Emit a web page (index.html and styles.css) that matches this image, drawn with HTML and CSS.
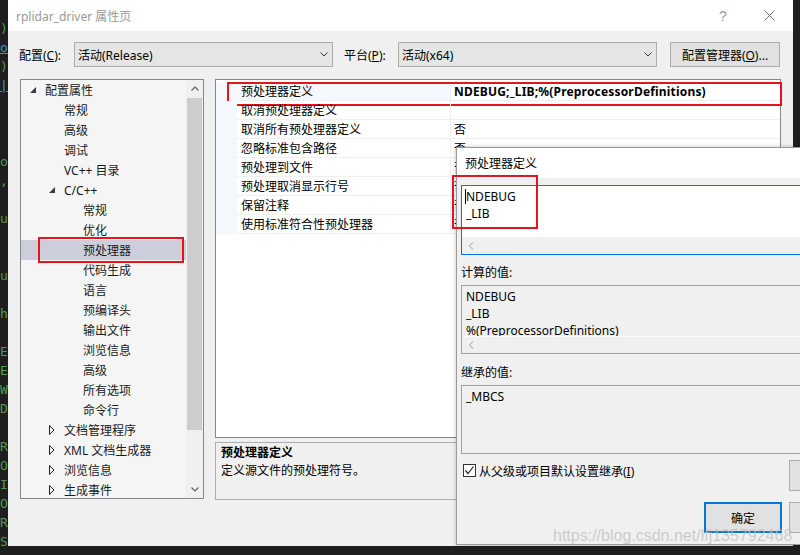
FILE: index.html
```html
<!DOCTYPE html>
<html lang="zh-CN">
<head>
<meta charset="utf-8">
<title>rplidar_driver 属性页</title>
<link rel="stylesheet" href="styles.css">
</head>
<body>
<div class="desktop">
  <pre class="code-strip"><span class="c">)</span>
<span class="lnk">o</span>
<span class="c">)</span>
<span class="lnk">|</span>



<span class="c">o</span>
<span class="c">,</span>

<span class="c">u</span>


<span class="c">u</span>

<span class="c">h</span>

<span class="c">E</span>
<span class="c">E</span>
<span class="c">W</span>
<span class="c">D</span>

<span class="c">R</span>
<span class="c">O</span>
<span class="c">I</span>
<span class="c">O</span>
<span class="c">R</span>
<span class="c">S</span></pre>

  <div class="window">
    <div class="titlebar">
      <span class="title">rplidar_driver 属性页</span>
      <span class="cap-btn help">?</span>
      <span class="cap-btn close"><svg width="11" height="11" viewBox="0 0 11 11"><path d="M0.5 0.5 L10.5 10.5 M10.5 0.5 L0.5 10.5" stroke="#6f6f6f" stroke-width="1" fill="none"/></svg></span>
    </div>

    <div class="config-row">
      <span class="lbl lbl-config">配置(<u>C</u>):</span>
      <div class="combo"><span>活动(Release)</span><svg class="chev" width="8" height="5" viewBox="0 0 8 5"><polyline points="0.5,0.5 4,4 7.5,0.5" fill="none" stroke="#333" stroke-width="1"/></svg></div>
      <span class="lbl lbl-platform">平台(<u>P</u>):</span>
      <div class="combo"><span>活动(x64)</span><svg class="chev" width="8" height="5" viewBox="0 0 8 5"><polyline points="0.5,0.5 4,4 7.5,0.5" fill="none" stroke="#333" stroke-width="1"/></svg></div>
      <button class="btn btn-mgr">配置管理器(<u>O</u>)...</button>
    </div>

    <div class="main">
      <div class="tree">
        <ul class="tree-list">
          <li class="ti l1"><span class="tw"><svg width="6" height="6" viewBox="0 0 6 6"><polygon points="6,0 6,6 0,6" fill="#3c3c3c"/></svg></span>配置属性</li>
          <li class="ti l2"><span class="tw"></span>常规</li>
          <li class="ti l2"><span class="tw"></span>高级</li>
          <li class="ti l2"><span class="tw"></span>调试</li>
          <li class="ti l2"><span class="tw"></span>VC++ 目录</li>
          <li class="ti l2"><span class="tw"><svg width="6" height="6" viewBox="0 0 6 6"><polygon points="6,0 6,6 0,6" fill="#3c3c3c"/></svg></span>C/C++</li>
          <li class="ti l3"><span class="tw"></span>常规</li>
          <li class="ti l3"><span class="tw"></span>优化</li>
          <li class="ti l3 sel"><span class="tw"></span>预处理器</li>
          <li class="ti l3"><span class="tw"></span>代码生成</li>
          <li class="ti l3"><span class="tw"></span>语言</li>
          <li class="ti l3"><span class="tw"></span>预编译头</li>
          <li class="ti l3"><span class="tw"></span>输出文件</li>
          <li class="ti l3"><span class="tw"></span>浏览信息</li>
          <li class="ti l3"><span class="tw"></span>高级</li>
          <li class="ti l3"><span class="tw"></span>所有选项</li>
          <li class="ti l3"><span class="tw"></span>命令行</li>
          <li class="ti l2"><span class="tw"><svg width="6" height="10" viewBox="0 0 6 10"><polygon points="0.5,0.5 5,5 0.5,9.5" fill="none" stroke="#1e1e1e" stroke-width="1"/></svg></span>文档管理程序</li>
          <li class="ti l2"><span class="tw"><svg width="6" height="10" viewBox="0 0 6 10"><polygon points="0.5,0.5 5,5 0.5,9.5" fill="none" stroke="#1e1e1e" stroke-width="1"/></svg></span>XML 文档生成器</li>
          <li class="ti l2"><span class="tw"><svg width="6" height="10" viewBox="0 0 6 10"><polygon points="0.5,0.5 5,5 0.5,9.5" fill="none" stroke="#1e1e1e" stroke-width="1"/></svg></span>浏览信息</li>
          <li class="ti l2"><span class="tw"><svg width="6" height="10" viewBox="0 0 6 10"><polygon points="0.5,0.5 5,5 0.5,9.5" fill="none" stroke="#1e1e1e" stroke-width="1"/></svg></span>生成事件</li>
        </ul>
        <div class="vscroll">
          <span class="sb-btn"><svg width="8" height="5" viewBox="0 0 8 5"><polyline points="0.5,4.5 4,1 7.5,4.5" fill="none" stroke="#606060" stroke-width="1.2"/></svg></span>
          <span class="thumb"></span>
          <span class="track"></span>
          <span class="sb-btn"><svg width="8" height="5" viewBox="0 0 8 5"><polyline points="0.5,0.5 4,4 7.5,0.5" fill="none" stroke="#606060" stroke-width="1.2"/></svg></span>
        </div>
      </div>

      <div class="right">
        <div class="pgrid">
          <div class="prow hl"><span class="pstripe"></span><span class="pname">预处理器定义</span><span class="pval bold">NDEBUG;_LIB;%(PreprocessorDefinitions)</span></div>
          <div class="prow"><span class="pstripe"></span><span class="pname">取消预处理器定义</span><span class="pval"></span></div>
          <div class="prow"><span class="pstripe"></span><span class="pname">取消所有预处理器定义</span><span class="pval">否</span></div>
          <div class="prow"><span class="pstripe"></span><span class="pname">忽略标准包含路径</span><span class="pval">否</span></div>
          <div class="prow"><span class="pstripe"></span><span class="pname">预处理到文件</span><span class="pval">否</span></div>
          <div class="prow"><span class="pstripe"></span><span class="pname">预处理取消显示行号</span><span class="pval">否</span></div>
          <div class="prow"><span class="pstripe"></span><span class="pname">保留注释</span><span class="pval">否</span></div>
          <div class="prow"><span class="pstripe"></span><span class="pname">使用标准符合性预处理器</span><span class="pval">否</span></div>
        </div>
        <div class="desc">
          <div class="desc-title">预处理器定义</div>
          <div>定义源文件的预处理符号。</div>
        </div>
      </div>
    </div>

    <div class="dialog">
      <div class="dlg-title">预处理器定义</div>
      <div class="dlg-body">
        <div class="editbox">
          <div class="eb-text"><span class="caret"></span>NDEBUG<br>_LIB</div>
          <div class="hscroll"><svg width="6" height="8" viewBox="0 0 6 8"><polyline points="5,0.5 1.5,4 5,7.5" fill="none" stroke="#c2c2c2" stroke-width="1.4"/></svg></div>
        </div>
        <div class="annot"></div>
        <div class="field-label">计算的值:</div>
        <div class="readbox">
          <div class="eb-text">NDEBUG<br>_LIB<br>%(PreprocessorDefinitions)</div>
          <div class="hscroll ro"><svg width="6" height="8" viewBox="0 0 6 8"><polyline points="5,0.5 1.5,4 5,7.5" fill="none" stroke="#c2c2c2" stroke-width="1.4"/></svg></div>
        </div>
        <div class="field-label second">继承的值:</div>
        <div class="readbox">
          <div class="eb-text">_MBCS</div>
        </div>
        <div class="check-row">
          <div class="check-cell">
            <span class="checkbox"><svg width="11" height="11" viewBox="0 0 11 11"><polyline points="1.5,5.5 4,8.5 9.5,1.5" fill="none" stroke="#222" stroke-width="1.2"/></svg></span>
            <span>从父级或项目默认设置继承(<u>I</u>)</span>
          </div>
          <button class="btn btn-side" aria-label="宏"></button>
        </div>
        <div class="btn-row">
          <button class="btn btn-ok">确定</button>
          <button class="btn btn-side" aria-label="取消"></button>
        </div>
      </div>
    </div>
  </div>

  <div class="watermark">https://blog.csdn.net/lfj135792468</div>
</div>
</body>
</html>
```

FILE: styles.css
```css
html, body {
  margin: 0;
  padding: 0;
  overflow: hidden;
}

body {
  width: 800px;
  height: 555px;
  background: #1e1e1e;
  font-family: "Noto Sans", "Noto Sans CJK SC", sans-serif;
  font-size: 12px;
  color: #000;
}

.desktop {
  position: relative;
  width: 800px;
  height: 555px;
  overflow: hidden;
  display: grid;
  grid-template-columns: 8px 785px 7px;
  grid-template-rows: 546px 9px;
}

.code-strip {
  grid-column: 1;
  grid-row: 1 / 3;
  margin: 0;
  padding-top: 19px;
  overflow: hidden;
  font-family: "DejaVu Sans Mono", "Liberation Mono", monospace;
  font-size: 13px;
  line-height: 19px;
  color: #4e9a4e;
}

.code-strip .lnk {
  color: #3b8eea;
  text-decoration: underline;
}

.window {
  grid-column: 2;
  grid-row: 1;
  position: relative;
  background: #f0f0f0;
  display: flex;
  flex-direction: column;
}

/* title bar */
.titlebar {
  height: 31px;
  background: #fff;
  display: flex;
  align-items: center;
  padding-left: 8px;
  padding-right: 1px;
}

.title {
  flex: 1;
  color: #9a9a9a;
}

.cap-btn {
  width: 46px;
  height: 31px;
  display: flex;
  align-items: center;
  justify-content: center;
  color: #9a9a9a;
}

.help {
  font-size: 14px;
  font-family: "Liberation Sans", sans-serif;
}

/* config row */
.config-row {
  display: flex;
  align-items: center;
  height: 25px;
  margin-top: 11px;
  padding-left: 11px;
}

.lbl-config {
  width: 55px;
}

.lbl-platform {
  width: 54px;
  margin-left: 11px;
}

.combo {
  width: 259px;
  height: 25px;
  box-sizing: border-box;
  border: 1px solid #adadad;
  background: #e5e5e5;
  display: flex;
  align-items: center;
  justify-content: space-between;
  padding: 0 4px 0 3px;
}

.btn {
  font: inherit;
  color: #000;
  padding: 0;
  margin: 0;
  box-sizing: border-box;
  border: 1px solid #adadad;
  background: #e1e1e1;
}

.btn-mgr {
  margin-left: 13px;
  width: 110px;
  height: 25px;
}

/* main area */
.main {
  display: flex;
  gap: 11px;
  margin-top: 12px;
  padding-left: 12px;
}

.tree {
  width: 184px;
  height: 420px;
  box-sizing: border-box;
  border: 1px solid #828790;
  background: #f5f5f5;
  display: flex;
}

.tree-list {
  list-style: none;
  margin: 0;
  padding: 0;
  flex: 1;
  overflow: hidden;
}

.ti {
  position: relative;
  height: 20px;
  display: flex;
  align-items: center;
  white-space: nowrap;
  color: #1a1a1a;
}

.tw {
  width: 15px;
  flex: none;
  display: flex;
  align-items: center;
}

.l1 { padding-left: 9px; }
.l2 { padding-left: 28px; }
.l3 { padding-left: 47px; }

.sel {
  background: #cccedb;
}

.sel::after {
  content: "";
  position: absolute;
  left: 17px;
  top: -3px;
  width: 146px;
  height: 26px;
  box-sizing: border-box;
  border: 2px solid #e5141e;
}

.vscroll {
  width: 17px;
  flex: none;
  background: #f0f0f0;
  display: flex;
  flex-direction: column;
  align-items: center;
}

.sb-btn {
  height: 17px;
  width: 17px;
  display: flex;
  align-items: center;
  justify-content: center;
}

.thumb {
  width: 15px;
  height: 332px;
  margin-top: 1px;
  background: #cdcdcd;
}

.track {
  flex: 1;
}

.right {
  width: 566px;
  display: flex;
  flex-direction: column;
  gap: 4px;
}

.pgrid {
  height: 359px;
  box-sizing: border-box;
  border: 1px solid #828790;
  background: #fff;
  padding-top: 2px;
}

.prow {
  position: relative;
  display: flex;
  height: 19px;
}

.pstripe {
  width: 21px;
  flex: none;
  background: #f4f7fb;
}

.pname {
  width: 214px;
  flex: none;
  box-sizing: border-box;
  padding: 2px 0 0 4px;
  border-bottom: 1px solid #efefef;
  border-right: 1px solid #efefef;
  line-height: 16px;
  white-space: nowrap;
}

.pval {
  flex: 1;
  box-sizing: border-box;
  padding: 2px 0 0 3px;
  border-bottom: 1px solid #efefef;
  line-height: 16px;
  white-space: nowrap;
}

.hl .pname {
  background: #f4f7fb;
}

.bold {
  font-weight: 700;
  letter-spacing: 0.18px;
}

.hl::after {
  content: "";
  position: absolute;
  left: 11px;
  top: 0;
  width: 555px;
  height: 24px;
  box-sizing: border-box;
  border: 2px solid #e5141e;
}

.desc {
  height: 58px;
  box-sizing: border-box;
  border: 1px solid #adadad;
  padding: 1px 0 0 5px;
  line-height: 18px;
}

.desc-title {
  font-weight: 700;
}

/* dialog */
.dialog {
  position: absolute;
  left: 448px;
  top: 147px;
  width: 440px;
  height: 398px;
  box-sizing: border-box;
  border: 1px solid #9a9a9a;
  background: #f0f0f0;
  box-shadow: 0 0 4px rgba(0, 0, 0, 0.25);
}

.dlg-title {
  height: 30px;
  background: #fff;
  display: flex;
  align-items: center;
  padding-left: 8px;
}

.dlg-body {
  position: relative;
  padding: 7px 0 0 4px;
}

.editbox {
  width: 400px;
  height: 70px;
  box-sizing: border-box;
  border: 1px solid #0078d7;
  background: #fff;
  display: flex;
  flex-direction: column;
}

.eb-text {
  flex: 1;
  min-height: 0;
  overflow: hidden;
  padding: 2px 0 0 4px;
  line-height: 17px;
}

.caret {
  display: inline-block;
  width: 1px;
  height: 15px;
  margin-left: -1px;
  background: #000;
  vertical-align: -3px;
}

.hscroll {
  height: 17px;
  flex: none;
  background: #f0f0f0;
  display: flex;
  align-items: center;
  padding-left: 6px;
}

.hscroll.ro {
  border-top: 1px solid #fbfbfb;
  height: 16px;
}

.annot {
  position: absolute;
  left: -5px;
  top: -3px;
  width: 86px;
  height: 54px;
  box-sizing: border-box;
  border: 2px solid #e5141e;
}

.field-label {
  margin-top: 9px;
  line-height: 17px;
}

.field-label.second {
  margin-top: 10px;
}

.readbox {
  width: 400px;
  height: 69px;
  margin-top: 4px;
  box-sizing: border-box;
  border: 1px solid #a0a0a0;
  display: flex;
  flex-direction: column;
  overflow: hidden;
}

.check-row {
  display: grid;
  grid-template-columns: 328px 90px;
  margin-top: 6px;
}

.check-cell {
  display: flex;
  align-items: center;
  height: 17px;
  padding-top: 2px;
  gap: 3px;
}

.checkbox {
  width: 13px;
  height: 13px;
  margin-left: 2px;
  box-sizing: border-box;
  border: 1px solid #333;
  background: #fff;
  display: flex;
  align-items: center;
  justify-content: center;
}

.btn-side {
  width: 90px;
  height: 31px;
}

.btn-row {
  display: flex;
  gap: 7px;
  margin-top: 11px;
  padding-left: 243px;
}

.btn-ok {
  width: 78px;
  height: 31px;
  border: 2px solid #0078d7;
}

.watermark {
  position: absolute;
  left: 553px;
  top: 526px;
  font-family: "Liberation Sans", Arial, sans-serif;
  font-size: 16px;
  line-height: 20px;
  color: rgba(190, 190, 190, 0.75);
  white-space: nowrap;
}
```
